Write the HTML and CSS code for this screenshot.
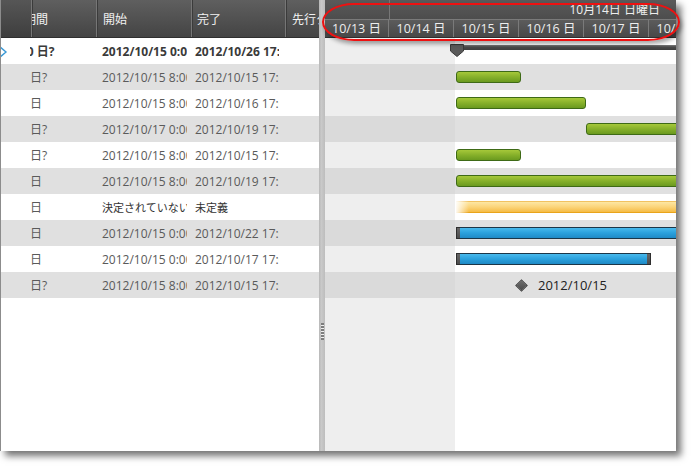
FILE: index.html
```html
<!DOCTYPE html>
<html lang="ja">

<head>
    <meta charset="UTF-8">
    <meta name="viewport" content="width=device-width, initial-scale=1.0">
    <title>ガント チャート</title>
    <link rel="stylesheet" href="styles.css">
</head>

<body>
    <div class="page">
        <div class="frame">
            <div class="grid">
                <div class="grid-head">
                    <div class="hcell c-ind"></div>
                    <div class="hcell c-dur"><span class="cut">期間</span></div>
                    <div class="hcell c-start">開始</div>
                    <div class="hcell c-finish">完了</div>
                    <div class="hcell c-pred">先行タスク</div>
                </div>
                <div class="grid-body">
                    <div class="row summary">
                        <div class="cell c-ind">
                            <svg class="chevron" width="8" height="14" viewBox="0 0 8 14"><polyline points="-2,1 5,7 -2,13" fill="none" stroke="#3c9ad6" stroke-width="1.4"/></svg>
                        </div>
                        <div class="cell c-dur"><span class="cut-num">10 日?</span></div>
                        <div class="cell c-start">2012/10/15 0:00</div>
                        <div class="cell c-finish">2012/10/26 17:00</div>
                        <div class="cell c-pred"></div>
                    </div>
                    <div class="row alt">
                        <div class="cell c-ind"></div>
                        <div class="cell c-dur">日?</div>
                        <div class="cell c-start">2012/10/15 8:00</div>
                        <div class="cell c-finish">2012/10/15 17:00</div>
                        <div class="cell c-pred"></div>
                    </div>
                    <div class="row">
                        <div class="cell c-ind"></div>
                        <div class="cell c-dur">日</div>
                        <div class="cell c-start">2012/10/15 8:00</div>
                        <div class="cell c-finish">2012/10/16 17:00</div>
                        <div class="cell c-pred"></div>
                    </div>
                    <div class="row alt">
                        <div class="cell c-ind"></div>
                        <div class="cell c-dur">日?</div>
                        <div class="cell c-start">2012/10/17 0:00</div>
                        <div class="cell c-finish">2012/10/19 17:00</div>
                        <div class="cell c-pred"></div>
                    </div>
                    <div class="row">
                        <div class="cell c-ind"></div>
                        <div class="cell c-dur">日?</div>
                        <div class="cell c-start">2012/10/15 8:00</div>
                        <div class="cell c-finish">2012/10/15 17:00</div>
                        <div class="cell c-pred"></div>
                    </div>
                    <div class="row alt">
                        <div class="cell c-ind"></div>
                        <div class="cell c-dur">日</div>
                        <div class="cell c-start">2012/10/15 8:00</div>
                        <div class="cell c-finish">2012/10/19 17:00</div>
                        <div class="cell c-pred"></div>
                    </div>
                    <div class="row">
                        <div class="cell c-ind"></div>
                        <div class="cell c-dur"><span class="cut-num">0 日</span></div>
                        <div class="cell c-start dark">決定されていない</div>
                        <div class="cell c-finish dark">未定義</div>
                        <div class="cell c-pred"></div>
                    </div>
                    <div class="row alt">
                        <div class="cell c-ind"></div>
                        <div class="cell c-dur">日</div>
                        <div class="cell c-start">2012/10/15 0:00</div>
                        <div class="cell c-finish">2012/10/22 17:00</div>
                        <div class="cell c-pred"></div>
                    </div>
                    <div class="row">
                        <div class="cell c-ind"></div>
                        <div class="cell c-dur">日</div>
                        <div class="cell c-start">2012/10/15 0:00</div>
                        <div class="cell c-finish">2012/10/17 17:00</div>
                        <div class="cell c-pred"></div>
                    </div>
                    <div class="row alt">
                        <div class="cell c-ind"></div>
                        <div class="cell c-dur">日?</div>
                        <div class="cell c-start">2012/10/15 8:00</div>
                        <div class="cell c-finish">2012/10/15 17:00</div>
                        <div class="cell c-pred"></div>
                    </div>
                </div>
            </div>

            <div class="splitter"><span class="grip"></span></div>

            <div class="chart">
                <div class="chart-head">
                    <div class="tier tier-top">
                        <div class="tcell first"></div>
                        <div class="tcell label">10月14日 日曜日</div>
                    </div>
                    <div class="tier tier-days">
                        <div class="day first">10/13 日</div>
                        <div class="day">10/14 日</div>
                        <div class="day">10/15 日</div>
                        <div class="day">10/16 日</div>
                        <div class="day">10/17 日</div>
                        <div class="day">10/18 日</div>
                    </div>
                </div>
                <div class="chart-body">
                    <div class="crow summary">
                        <div class="sum-bar" style="margin-left: 130px;">
                            <svg class="sum-mark" width="14" height="13" viewBox="0 0 14 13"><path d="M0.5 0.5 H13.5 V7 L7 12.5 L0.5 7 Z" fill="#5a5a5a" stroke="#3a3a3a"/></svg>
                        </div>
                    </div>
                    <div class="crow alt"><div class="bar green" style="margin-left: 131px; width: 65px;"></div></div>
                    <div class="crow"><div class="bar green" style="margin-left: 131px; width: 130px;"></div></div>
                    <div class="crow alt"><div class="bar green" style="margin-left: 261px; width: 120px;"></div></div>
                    <div class="crow"><div class="bar green" style="margin-left: 131px; width: 65px;"></div></div>
                    <div class="crow alt"><div class="bar green" style="margin-left: 131px; width: 240px;"></div></div>
                    <div class="crow"><div class="bar orange" style="margin-left: 131px; width: 240px;"></div></div>
                    <div class="crow alt"><div class="bar blue" style="margin-left: 131px; width: 240px;"></div></div>
                    <div class="crow"><div class="bar blue end" style="margin-left: 131px; width: 195px;"></div></div>
                    <div class="crow alt">
                        <span class="milestone" style="margin-left: 192px;"></span>
                        <span class="ms-label">2012/10/15</span>
                    </div>
                </div>
            </div>
        </div>
        <div class="callout"></div>
    </div>
</body>

</html>
```

FILE: styles.css
```css
body {
    margin: 0;
    background-color: #ffffff;
    font-family: "Open Sans", "Noto Sans CJK JP", sans-serif;
    font-size: 12px;
}

.page {
    position: relative;
    width: 691px;
    height: 467px;
}

.frame {
    display: flex;
    width: 675px;
    height: 451px;
    border-left: 1px solid #8c8c8c;
    background-color: #ffffff;
    box-shadow: 5px 5px 7px rgba(0, 0, 0, 0.55);
    overflow: hidden;
}

/* left grid */

.grid {
    width: 318px;
    flex: none;
}

.grid-head {
    display: flex;
    height: 37px;
    border-bottom: 1px solid #2f2f2f;
    background: linear-gradient(#5f5f5f, #444444);
    color: #f2f2f2;
}

.hcell {
    display: flex;
    align-items: center;
    box-sizing: border-box;
    overflow: hidden;
    white-space: nowrap;
    border-left: 1px solid #767676;
    box-shadow: inset 1px 0 0 #3b3b3b;
    padding-left: 6px;
}

.hcell.c-ind {
    width: 30px;
    border-left: none;
    box-shadow: none;
    background: linear-gradient(#565656, #3e3e3e);
}

.hcell.c-dur {
    width: 65px;
    padding-left: 0;
}

.hcell.c-start {
    width: 95px;
}

.hcell.c-finish {
    width: 94px;
    padding-left: 5px;
}

.hcell.c-pred {
    width: 34px;
}

.cut {
    margin-left: -8px;
}

.row {
    display: flex;
    height: 26px;
    align-items: center;
    color: #5a5a5a;
}

.row.alt {
    background-color: #e0e0e0;
}

.row.summary {
    font-weight: bold;
    color: #3a3a3a;
}

.cell {
    box-sizing: border-box;
    overflow: hidden;
    white-space: nowrap;
    padding-left: 4px;
}

.cell.c-ind {
    width: 29px;
    padding-left: 0;
    height: 26px;
    display: flex;
    align-items: center;
}

.chevron {
    margin-top: 2px;
}

.cell.c-dur {
    width: 66px;
    padding-left: 0;
}

.cut-num {
    display: inline-block;
    margin-left: -10px;
}

.cell.c-start {
    width: 95px;
    padding-left: 6px;
    clip-path: inset(0 4px 0 0);
}

.cell.c-finish {
    width: 94px;
    clip-path: inset(0 6px 0 0);
}

.cell.c-pred {
    width: 34px;
}

.cell.dark {
    color: #333333;
    font-size: 11px;
}

/* splitter */

.splitter {
    width: 6px;
    flex: none;
    background: linear-gradient(to right, #b8b8b8, #c9c9c9 40%, #bdbdbd);
    display: flex;
    justify-content: center;
    box-sizing: border-box;
}

.grip {
    width: 3px;
    height: 17px;
    margin-top: 323px;
    background: repeating-linear-gradient(#7d7d7d 0 2px, #efefef 2px 3px);
}

/* chart */

.chart {
    flex: 1;
    overflow: hidden;
}

.chart-head {
    height: 37px;
    border-bottom: 1px solid #2f2f2f;
    color: #eeeeee;
}

.tier {
    display: flex;
    white-space: nowrap;
}

.tier-top {
    height: 19px;
    border-bottom: 1px solid #7a7a7a;
    background: linear-gradient(#5a5a5a, #4d4d4d);
}

.tcell.first {
    width: 64px;
    flex: none;
    border-right: 1px solid #777777;
}

.tcell.label {
    flex: 1;
    text-align: right;
    padding-right: 16px;
    line-height: 19px;
}

.tier-days {
    height: 17px;
    background: linear-gradient(#5c5c5c, #484848);
}

.day {
    width: 65px;
    flex: none;
    box-sizing: border-box;
    border-right: 1px solid #7a7a7a;
    text-align: center;
    line-height: 17px;
    font-size: 12.5px;
}

.day.first {
    width: 64px;
}

.chart-body {
    height: 413px;
    background: linear-gradient(to right, #eeeeee 0 130px, #ffffff 130px);
}

.crow {
    display: flex;
    align-items: center;
    height: 26px;
}

.crow.alt {
    background: linear-gradient(to right, #dadada 0 130px, #e0e0e0 130px);
}

.crow.summary {
    align-items: flex-start;
}

.sum-bar {
    position: relative;
    flex: none;
    width: 240px;
    height: 5px;
    margin-top: 7px;
    background: linear-gradient(#7a7a7a, #4a4a4a 40%, #3e3e3e);
}

.sum-mark {
    position: absolute;
    left: -5px;
    top: -1px;
}

.bar {
    position: relative;
    flex: none;
    height: 12px;
    box-sizing: border-box;
    border-radius: 3px;
}

.bar.green {
    background: linear-gradient(#a6c83a, #86b02a 50%, #6a9a1f);
    border: 1px solid #3e6a16;
}

.bar.orange {
    background: linear-gradient(#fde7a4, #fbd479 50%, #f5bb45);
    border-top: 1px solid #f1c261;
    border-bottom: 1px solid #e9a41a;
    border-radius: 0;
}

.bar.orange::before {
    content: "";
    position: absolute;
    left: -1px;
    top: -2px;
    bottom: -2px;
    width: 14px;
    background: linear-gradient(to right, #ffffff, rgba(255, 255, 255, 0));
}

.bar.blue {
    background: linear-gradient(#48b9ec, #2aa0dc 50%, #1f8ac6);
    border: 1px solid #1b3648;
    border-radius: 1px;
}

.bar.blue::before,
.bar.blue.end::after {
    content: "";
    position: absolute;
    top: -1px;
    bottom: -1px;
    width: 3px;
    background: linear-gradient(#666666, #4c4c4c);
    border: 1px solid #2e2e2e;
}

.bar.blue::before {
    left: -1px;
    border-right: none;
}

.bar.blue.end::after {
    right: -1px;
    border-left: none;
}

.milestone {
    flex: none;
    width: 9px;
    height: 9px;
    transform: rotate(45deg);
    background: linear-gradient(135deg, #6e6e6e, #4a4a4a);
    border: 1px solid #3a3a3a;
    box-sizing: border-box;
}

.ms-label {
    margin-left: 12px;
    font-size: 13px;
    color: #222222;
}

/* annotation ring around the timescale */

.callout {
    position: absolute;
    left: 322px;
    top: 3px;
    width: 358px;
    height: 38px;
    box-sizing: border-box;
    border: 2px solid #ee1111;
    border-radius: 32px / 19px;
    box-shadow: 2px 3px 4px rgba(0, 0, 0, 0.35);
}
```
